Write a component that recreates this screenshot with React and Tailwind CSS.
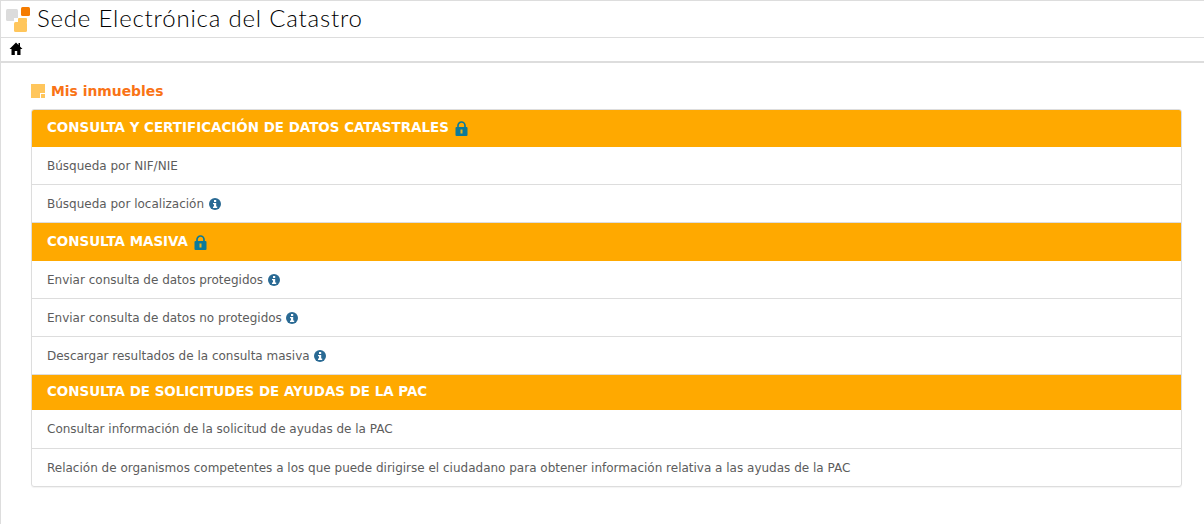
import React from "react";

function Lock() {
  return (
    <svg width="13" height="15" viewBox="0 0 13 15" className="ml-[6px] shrink-0">
      <path d="M3 7V4.5a3.5 3.5 0 0 1 7 0V7" fill="none" stroke="#0b7a99" strokeWidth="1.7" />
      <rect x="0.5" y="6" width="12" height="9" rx="1" fill="#0b7a99" />
      <rect x="5.5" y="8.5" width="2" height="4" fill="#e8b520" />
    </svg>
  );
}

function Info() {
  return (
    <svg width="12" height="12" viewBox="0 0 12 12" className="ml-[4.5px] shrink-0">
      <circle cx="6" cy="6" r="6" fill="#2a6a94" />
      <rect x="5" y="2" width="2.2" height="2" fill="#fff" />
      <path d="M4 5h3.2v3.6H8.2V10H4V8.6h1V6.3H4z" fill="#fff" />
    </svg>
  );
}

function Logo() {
  return (
    <svg width="24" height="25" viewBox="0 0 24 25" className="shrink-0">
      <rect x="0" y="2" width="12" height="12" rx="1.500" fill="#dcdcdc" />
      <rect x="15" y="0" width="9" height="9" rx="1.500" fill="#f57c00" />
      <rect x="8" y="11" width="4" height="3" fill="#fff" />
      <rect x="8" y="15" width="13" height="10" rx="1.500" fill="#ffc65c" />
      <rect x="12" y="11" width="9" height="5" rx="1" fill="#ffc65c" />
    </svg>
  );
}

function Head({ title, lock, h }) {
  return (
    <div className={`bg-[#ffa900] flex items-center pl-[15px] text-white font-bold text-[13.45px] ${h}`}>
      <span>{title}</span>
      {lock && <Lock />}
    </div>
  );
}

function Row({ text, info, last, h = "h-[38px]" }) {
  return (
    <div className={`flex items-center pl-[15px] text-[12px] text-[#5c5c5c] ${h} ${last ? "" : "border-b border-[#ddd]"}`}>
      <span>{text}</span>
      {info && <Info />}
    </div>
  );
}

export default function App() {
  return (
    <div className="h-[524px] bg-white border-l border-[#ddd] overflow-hidden font-['DejaVu_Sans','Liberation_Sans',sans-serif]">
      <header className="h-[38px] border-y border-[#ddd] flex items-center pl-[5px]">
        <Logo />
        <span className="ml-[7px] text-[24px] font-light tracking-[0.8px] text-black font-['Lato',sans-serif] -translate-y-[1px]">Sede Electrónica del Catastro</span>
      </header>
      <nav className="h-[25px] border-b-2 border-[#ddd] flex items-center pl-[8px]">
        <svg width="14" height="13" viewBox="0 0 14 13" className="-translate-y-[1px]">
          <path d="M7 0.500 0.500 7H2.500V13H5.800V9H8.200V13H11.500V7H13.500L11 4.500V1H9.500V3z" fill="#000" />
        </svg>
      </nav>
      <main className="pt-[19px] pl-[30px] pr-[22px]">
        <div className="flex items-center h-[18px] mb-[9px]">
          <svg width="14" height="14" viewBox="0 0 14 14" className="shrink-0">
            <path d="M0 0H14V9H9V14H0z" fill="#ffc65c" />
            <rect x="10" y="10" width="4" height="4" fill="#ffc65c" />
          </svg>
          <h1 className="ml-[6px] text-[13.9px] font-bold text-[#f97316]">Mis inmuebles</h1>
        </div>
        <div className="border border-[#ddd] rounded-[3px] overflow-hidden shadow-[0_1px_1px_rgba(0,0,0,0.05)]">
          <Head title="CONSULTA Y CERTIFICACIÓN DE DATOS CATASTRALES" lock h="h-[37px]" />
          <Row text="Búsqueda por NIF/NIE" />
          <Row text="Búsqueda por localización" info />
          <Head title="CONSULTA MASIVA" lock h="h-[38px]" />
          <Row text="Enviar consulta de datos protegidos" info />
          <Row text="Enviar consulta de datos no protegidos" info />
          <Row text="Descargar resultados de la consulta masiva" info />
          <Head title="CONSULTA DE SOLICITUDES DE AYUDAS DE LA PAC" h="h-[35px]" />
          <Row text="Consultar información de la solicitud de ayudas de la PAC" h="h-[39px]" />
          <Row text="Relación de organismos competentes a los que puede dirigirse el ciudadano para obtener información relativa a las ayudas de la PAC" last h="h-[37px]" />
        </div>
      </main>
    </div>
  );
}
